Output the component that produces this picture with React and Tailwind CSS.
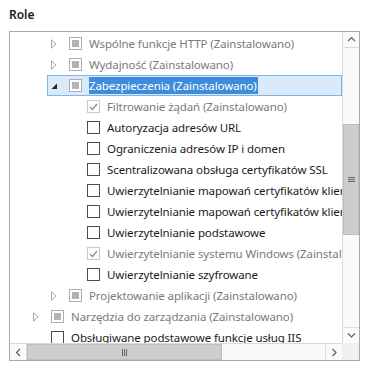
import React from 'react';

const rows = [
  { level: 2, arrow: 'collapsed', check: 'partial', text: 'Wspólne funkcje HTTP (Zainstalowano)', muted: true },
  { level: 2, arrow: 'collapsed', check: 'partial', text: 'Wydajność (Zainstalowano)', muted: true },
  { level: 2, arrow: 'expanded', check: 'partial', text: 'Zabezpieczenia (Zainstalowano)', selected: true },
  { level: 3, check: 'done', text: 'Filtrowanie żądań (Zainstalowano)', muted: true },
  { level: 3, check: 'empty', text: 'Autoryzacja adresów URL' },
  { level: 3, check: 'empty', text: 'Ograniczenia adresów IP i domen' },
  { level: 3, check: 'empty', text: 'Scentralizowana obsługa certyfikatów SSL' },
  { level: 3, check: 'empty', text: 'Uwierzytelnianie mapowań certyfikatów klienta' },
  { level: 3, check: 'empty', text: 'Uwierzytelnianie mapowań certyfikatów klientów usług IIS' },
  { level: 3, check: 'empty', text: 'Uwierzytelnianie podstawowe' },
  { level: 3, check: 'done', text: 'Uwierzytelnianie systemu Windows (Zainstalowano)', muted: true },
  { level: 3, check: 'empty', text: 'Uwierzytelnianie szyfrowane' },
  { level: 2, arrow: 'collapsed', check: 'partial', text: 'Projektowanie aplikacji (Zainstalowano)', muted: true },
  { level: 1, arrow: 'collapsed', check: 'partial', text: 'Narzędzia do zarządzania (Zainstalowano)', muted: true },
  { level: 1, check: 'empty', text: 'Obsługiwane podstawowe funkcje usług IIS' },
];

const indent = { 1: 'pl-[19px]', 2: 'pl-[37px]', 3: 'pl-[55px]' };

function Arrow({ kind }) {
  if (kind === 'collapsed') {
    return (
      <svg width="6" height="10" viewBox="0 0 6 10" className="ml-[3px]">
        <path d="M0.5 0.8 L5 5 L0.5 9.2 Z" fill="none" stroke="#a6a6a6" strokeWidth="1" />
      </svg>
    );
  }
  if (kind === 'expanded') {
    return (
      <svg width="7" height="7" viewBox="0 0 7 7" className="ml-[3px] mt-[2px]">
        <path d="M6 0.5 L6 6 L0.5 6 Z" fill="#262626" />
      </svg>
    );
  }
  return null;
}

function Check({ kind }) {
  if (kind === 'partial') {
    return (
      <div className="w-[13px] h-[13px] border border-[#adadad] bg-white flex items-center justify-center shrink-0">
        <div className="w-[7px] h-[7px] bg-[#b3b3b3]" />
      </div>
    );
  }
  if (kind === 'done') {
    return (
      <div className="w-[13px] h-[13px] border border-[#c9c9c9] bg-white flex items-center justify-center shrink-0">
        <svg width="9" height="8" viewBox="0 0 9 8">
          <path d="M1 4 L3.5 6.5 L8 1" fill="none" stroke="#8f8f8f" strokeWidth="1.4" />
        </svg>
      </div>
    );
  }
  return <div className="w-[13px] h-[13px] border border-[#4d4d4d] bg-white shrink-0" />;
}

function Row({ level, arrow, check, text, muted, selected }) {
  return (
    <div className={`h-[21px] flex ${indent[level]}`}>
      <div
        className={`flex-1 flex items-center min-w-0 ${
          selected ? 'bg-[#d9ebfb] border border-[#84b4e6]' : 'border border-transparent'
        }`}
      >
        <div className="w-[21px] shrink-0 flex items-center">
          <Arrow kind={arrow} />
        </div>
        <Check kind={check} />
        <span
          className={`ml-[7px] whitespace-nowrap leading-[17px] ${
            selected ? 'bg-[#3e8ddd] text-white pr-[1px]' : muted ? 'text-[#7a7a7a]' : 'text-[#1a1a1a]'
          }`}
        >
          {text}
        </span>
      </div>
    </div>
  );
}

function Chevron({ dir }) {
  const d = {
    up: 'M1 5 L4.5 1.5 L8 5',
    down: 'M1 1.5 L4.5 5 L8 1.5',
    left: 'M5 1 L1.5 4.5 L5 8',
    right: 'M1.5 1 L5 4.5 L1.5 8',
  }[dir];
  const vertical = dir === 'up' || dir === 'down';
  return (
    <svg width={vertical ? 9 : 7} height={vertical ? 7 : 9} viewBox={vertical ? '0 0 9 7' : '0 0 7 9'}>
      <path d={d} fill="none" stroke="#606060" strokeWidth="1.2" />
    </svg>
  );
}

export default function App() {
  return (
    <div
      className="w-[374px] h-[370px] bg-white pl-[9px] pt-[7px] text-[11.5px] tracking-[-0.1px]"
      style={{ fontFamily: '"Noto Sans", "Open Sans", sans-serif' }}
    >
      <div className="h-[24px] font-semibold text-[12px] tracking-normal text-[#1a1a1a] leading-[16px]">Role</div>
      <div className="w-[351px] h-[330px] border border-[#a9a9a9] grid grid-cols-[332px_17px] grid-rows-[311px_17px]">
        <div className="overflow-hidden pt-[1px]">
          {rows.map((r, i) => (
            <Row key={i} {...r} />
          ))}
        </div>

        <div className="border-l border-[#d9d9d9] bg-[#fafafa] flex flex-col">
          <div className="h-[16px] border-b border-[#dcdcdc] flex items-center justify-center">
            <Chevron dir="up" />
          </div>
          <div className="flex-1 flex flex-col pt-[76px] pb-[92px]">
            <div className="flex-1 bg-[#cdcdcd] border border-[#bdbdbd] flex items-center justify-center">
              <div className="flex flex-col gap-[1px]">
                <div className="w-[7px] h-[1px] bg-[#666]" />
                <div className="w-[7px] h-[1px] bg-[#666]" />
                <div className="w-[7px] h-[1px] bg-[#666]" />
              </div>
            </div>
          </div>
          <div className="h-[16px] border-t border-[#dcdcdc] flex items-center justify-center">
            <Chevron dir="down" />
          </div>
        </div>

        <div className="border-t border-[#d9d9d9] bg-[#fafafa] flex">
          <div className="w-[17px] border-r border-[#dcdcdc] flex items-center justify-center">
            <Chevron dir="left" />
          </div>
          <div className="flex-1 flex pr-[103px]">
            <div className="flex-1 bg-[#cdcdcd] border border-[#bdbdbd] flex items-center justify-center">
              <div className="flex gap-[1px]">
                <div className="w-[1px] h-[7px] bg-[#666]" />
                <div className="w-[1px] h-[7px] bg-[#666]" />
                <div className="w-[1px] h-[7px] bg-[#666]" />
              </div>
            </div>
          </div>
          <div className="w-[17px] border-l border-[#dcdcdc] flex items-center justify-center">
            <Chevron dir="right" />
          </div>
        </div>

        <div className="bg-[#f0f0f0]" />
      </div>
    </div>
  );
}
